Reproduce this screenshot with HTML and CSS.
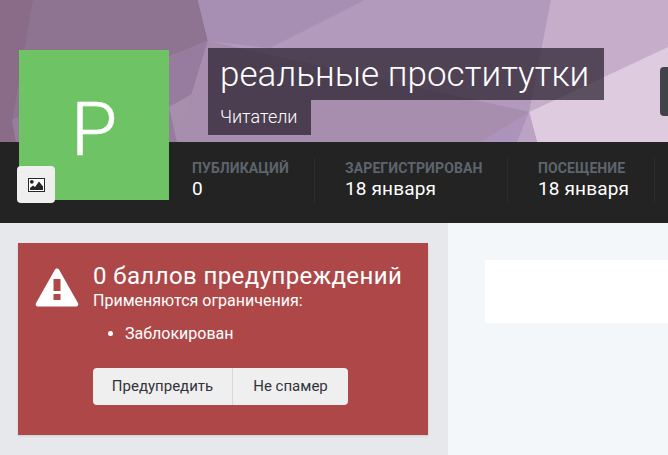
FILE: index.html
```html
<!DOCTYPE html>
<html lang="ru">
<head>
<meta charset="utf-8">
<title>реальные проститутки</title>
<link rel="stylesheet" href="styles.css">
</head>
<body>
<header class="profile">
  <div class="cover">
    <svg class="cover-art" viewBox="0 0 668 142" preserveAspectRatio="none" aria-hidden="true">
      <rect width="668" height="142" fill="#b19abc"/>
      <polygon points="0,0 198,0 208,41 0,125" fill="#8f7491"/>
      <polygon points="0,125 208,41 177,142 15,142" fill="#977ca0"/>
      <polygon points="169,107 208,85 195,142 177,142" fill="#a78fae"/>
      <polygon points="0,0 33,0 12,122 16,142 0,142" fill="#8a6c88"/>
      <polygon points="198,0 365,0 270,48 208,41" fill="#a78fb4"/>
      <polygon points="208,41 529,112 517,142 177,142" fill="#a78eae"/>
      <polygon points="529,112 480,142 517,142" fill="#ab93bb"/>
      <polygon points="551,0 668,0 668,47 529,112" fill="#c6aecb"/>
      <polygon points="529,112 668,47 668,142 537,142" fill="#dfcbe0"/>
      <polygon points="517,142 529,112 537,142" fill="#bca3c6"/>
    </svg>
    <div class="identity">
      <h1 class="name">реальные проститутки</h1>
      <div class="group">Читатели</div>
    </div>
    <div class="cover-btn"></div>
  </div>
  <div class="stats">
    <div class="stat stat-posts">
      <div class="stat-label">Публикаций</div>
      <div class="stat-value">0</div>
    </div>
    <div class="stat stat-joined">
      <div class="stat-label">Зарегистрирован</div>
      <div class="stat-value">18 января</div>
    </div>
    <div class="stat stat-visit">
      <div class="stat-label">Посещение</div>
      <div class="stat-value">18 января</div>
    </div>
  </div>
  <div class="avatar">P</div>
  <div class="photo-btn">
    <svg width="17" height="14" viewBox="0 0 17 14" aria-hidden="true">
      <rect x="0.5" y="0.5" width="16" height="13" fill="#fff" stroke="#26262a"/>
      <circle cx="3.800" cy="3.800" r="1.900" fill="#26262a"/>
      <polygon points="2,12 2,10 5,7.500 7,9 11,3.500 15,8.500 15,12" fill="#26262a"/>
    </svg>
  </div>
</header>
<main class="content">
  <aside class="side">
    <section class="warn">
      <svg class="warn-icon" width="44" height="40" viewBox="0 0 44 40" aria-hidden="true">
        <path d="M22 1.500c1 0 1.800.6 2.300 1.400l18.600 33c1 1.700-.2 3.600-2 3.600H3.100c-1.800 0-3-1.900-2-3.600l18.600-33C20.200 2.100 21 1.500 22 1.500z" fill="#fff"/>
        <rect x="18.500" y="12" width="7" height="12" fill="#ae4848"/>
        <rect x="18.500" y="27" width="7" height="6" fill="#ae4848"/>
      </svg>
      <div class="warn-body">
        <h2 class="warn-title">0 баллов предупреждений</h2>
        <p class="warn-sub">Применяются ограничения:</p>
        <ul class="warn-list">
          <li>Заблокирован</li>
        </ul>
        <div class="btn-group">
          <a class="btn btn-warn">Предупредить</a>
          <a class="btn btn-spam">Не спамер</a>
        </div>
      </div>
    </section>
  </aside>
  <div class="main-col">
    <div class="panel"></div>
  </div>
</main>
</body>
</html>
```
FILE: styles.css
```css
html, body {
  margin: 0;
  padding: 0;
}
body {
  width: 668px;
  height: 455px;
  overflow: hidden;
  font-family: Roboto, "Liberation Sans", sans-serif;
  background: #f3f7fa;
}
.profile {
  position: relative;
}
.cover {
  position: relative;
  height: 142px;
  overflow: hidden;
  box-sizing: border-box;
  padding: 48px 0 0 208px;
  display: flex;
  align-items: flex-start;
}
.cover-art {
  position: absolute;
  left: 0;
  top: 0;
  width: 100%;
  height: 100%;
}
.identity {
  position: relative;
  flex: none;
  width: 396px;
}
.name {
  margin: 0;
  height: 52px;
  box-sizing: border-box;
  padding: 0 12px;
  font-size: 35px;
  font-weight: 300;
  line-height: 54px;
  letter-spacing: 0.05px;
  white-space: nowrap;
  color: #fff;
  background: rgba(40, 32, 44, 0.72);
}
.group {
  display: inline-block;
  height: 35px;
  box-sizing: border-box;
  padding: 0 13px 0 12px;
  width: 103px;
  font-size: 18px;
  font-weight: 300;
  line-height: 33px;
  color: #fff;
  background: rgba(40, 32, 44, 0.72);
}
.cover-btn {
  position: relative;
  flex: none;
  width: 20px;
  height: 49px;
  margin: 19px 0 0 56px;
  border-radius: 4px 0 0 4px;
  background: #42424b;
}
.stats {
  height: 81px;
  box-sizing: border-box;
  padding: 16px 0 0 192px;
  display: flex;
  background: #232323;
}
.stat {
  box-sizing: border-box;
  height: 45px;
  border-right: 1px solid #2c2c2c;
  flex: none;
}
.stat-posts { width: 123px; }
.stat-joined { width: 193px; padding-left: 30px; }
.stat-visit { width: 147px; padding-left: 30px; }
.stat-label {
  font-size: 14px;
  font-weight: 700;
  line-height: 20px;
  letter-spacing: 0.1px;
  text-transform: uppercase;
  color: #5d656c;
  white-space: nowrap;
}
.stat-value {
  font-size: 19px;
  line-height: 22px;
  letter-spacing: 0.15px;
  color: #fff;
  white-space: nowrap;
}
.avatar {
  position: absolute;
  left: 19px;
  top: 50px;
  width: 150px;
  height: 150px;
  background: #6ec464;
  color: #fff;
  font-size: 75px;
  font-weight: 300;
  -webkit-text-stroke: 0.7px #fff;
  line-height: 158px;
  text-align: center;
}
.photo-btn {
  position: absolute;
  left: 17px;
  top: 166px;
  width: 38px;
  height: 37px;
  border-radius: 4px;
  background: #efefef;
  display: flex;
  align-items: center;
  justify-content: center;
}
.content {
  display: flex;
  height: 232px;
}
.side {
  flex: none;
  width: 448px;
  box-sizing: border-box;
  padding: 20px 20px 0 18px;
  background: #e6e8ec;
}
.warn {
  height: 192px;
  box-sizing: border-box;
  padding: 23px 0 0 18px;
  display: flex;
  align-items: flex-start;
  gap: 13px;
  background: #ae4848;
  box-shadow: 0 1px 2px rgba(0, 0, 0, 0.12);
  color: #fff;
}
.warn-icon {
  flex: none;
  margin: 1px 1px 0 -1px;
}
.warn-body {
  flex: 1;
}
.warn-title {
  margin: -4px 0 0;
  font-size: 24px;
  font-weight: 400;
  line-height: 28px;
  letter-spacing: 0.4px;
  white-space: nowrap;
}
.warn-sub {
  margin: 0;
  font-size: 16px;
  line-height: 21px;
}
.warn-list {
  margin: 11px 0 0;
  padding: 0 0 0 32px;
  font-size: 16px;
  line-height: 23px;
}
.btn-group {
  display: inline-flex;
  margin-top: 23px;
  height: 37px;
  border-radius: 4px;
  background: #efefef;
  color: #33333b;
  font-size: 15px;
  line-height: 37px;
}
.btn {
  display: block;
  text-align: center;
}
.btn-warn {
  width: 139px;
  border-right: 1px solid #d8d8d8;
}
.btn-spam {
  width: 115px;
}
.main-col {
  flex: 1;
  box-sizing: border-box;
  padding: 37px 0 0 37px;
}
.panel {
  height: 63px;
  background: #fff;
}
```
